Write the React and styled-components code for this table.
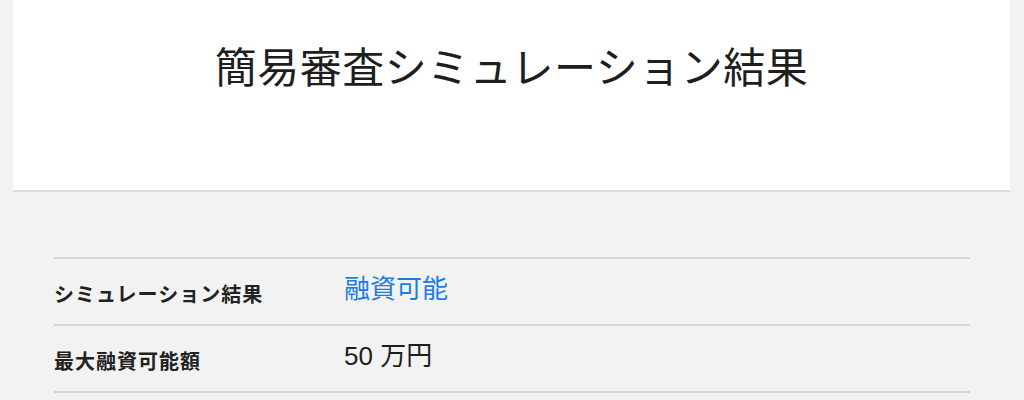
import styled, { createGlobalStyle } from "styled-components";

const GlobalStyle = createGlobalStyle`
  html, body {
    margin: 0;
    padding: 0;
    background: #f2f2f2;
  }
  body {
    font-family: "Noto Sans CJK JP", "Noto Sans", sans-serif;
    color: #222;
  }
`;

const rows = [
  { label: "シミュレーション結果", value: "融資可能", accent: true },
  { label: "最大融資可能額", value: "50 万円" },
];

const App = () => {
  return (
    <Page>
      <GlobalStyle />
      <HeaderCard>
        <Title>簡易審査シミュレーション結果</Title>
      </HeaderCard>
      <ResultTable>
        {rows.map((row) => (
          <Row key={row.label}>
            <Label>{row.label}</Label>
            <Value $accent={row.accent}>{row.value}</Value>
          </Row>
        ))}
      </ResultTable>
    </Page>
  );
};

export default App;

const Page = styled.div`
  width: 1024px;
  height: 400px;
  overflow: hidden;
  padding: 0 14px 0 13px;
  box-sizing: border-box;
`;

const HeaderCard = styled.header`
  background: #fff;
  height: 192px;
  border-bottom: 2px solid #dcdcdc;
  display: flex;
  justify-content: center;
  padding-top: 37px;
  box-sizing: border-box;
`;

const Title = styled.h1`
  margin: 0;
  font-size: 42px;
  line-height: 56px;
  font-weight: 400;
  letter-spacing: 0.5px;
  color: #1e1e1e;
`;

const ResultTable = styled.div`
  margin: 65px 40px 0 41px;
  border-top: 2px solid #d6d6d6;
`;

const Row = styled.div`
  display: grid;
  grid-template-columns: 290px 1fr;
  align-items: center;
  height: 67px;
  box-sizing: border-box;
  border-bottom: 2px solid #d6d6d6;
`;

const Label = styled.div`
  font-size: 20px;
  font-weight: 700;
  letter-spacing: 1px;
  color: #222;
  padding-top: 3px;
`;

const Value = styled.div`
  font-family: "Liberation Sans", "Noto Sans CJK JP", sans-serif;
  font-size: 26px;
  color: ${(p) => (p.$accent ? "#1c7fe0" : "#1e1e1e")};
  padding-bottom: 11px;
`;
